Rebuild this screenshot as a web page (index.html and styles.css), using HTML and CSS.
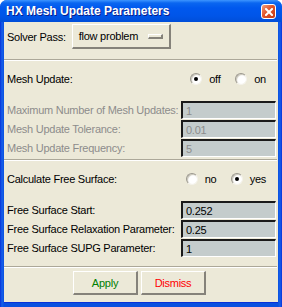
FILE: index.html
```html
<!DOCTYPE html>
<html lang="en">
<head>
    <meta charset="UTF-8">
    <title>HX Mesh Update Parameters</title>
    <link rel="stylesheet" href="styles.css">
</head>
<body>
    <div class="window">
        <div class="titlebar">
            <span class="title">HX Mesh Update Parameters</span>
            <span class="close">
                <svg width="8" height="8" viewBox="0 0 8 8">
                    <path d="M1 1 L7 7 M7 1 L1 7" stroke="#fff" stroke-width="2" stroke-linecap="square"/>
                </svg>
            </span>
        </div>

        <div class="client">
            <div class="section solver">
                <span class="label">Solver Pass:</span>
                <div class="menubutton">flow problem<span class="indicator"></span></div>
            </div>
            <div class="sep"></div>

            <div class="section mesh">
                <div class="head">
                    <span class="label">Mesh Update:</span>
                    <div class="radios">
                        <label class="radio first"><span class="dot checked"></span>off</label>
                        <label class="radio"><span class="dot"></span>on</label>
                    </div>
                </div>
                <div class="fields">
                    <div class="field disabled"><span class="label">Maximum Number of Mesh Updates:</span><div class="entry">1</div></div>
                    <div class="field disabled"><span class="label">Mesh Update Tolerance:</span><div class="entry">0.01</div></div>
                    <div class="field disabled"><span class="label">Mesh Update Frequency:</span><div class="entry">5</div></div>
                </div>
            </div>
            <div class="sep"></div>

            <div class="section surface">
                <div class="head">
                    <span class="label">Calculate Free Surface:</span>
                    <div class="radios">
                        <label class="radio first"><span class="dot"></span>no</label>
                        <label class="radio"><span class="dot checked"></span>yes</label>
                    </div>
                </div>
                <div class="fields">
                    <div class="field"><span class="label">Free Surface Start:</span><div class="entry">0.252</div></div>
                    <div class="field"><span class="label">Free Surface Relaxation Parameter:</span><div class="entry">0.25</div></div>
                    <div class="field"><span class="label">Free Surface SUPG Parameter:</span><div class="entry">1</div></div>
                </div>
            </div>
            <div class="sep"></div>

            <div class="actions">
                <button class="btn apply">Apply</button>
                <button class="btn dismiss">Dismiss</button>
            </div>
        </div>
    </div>
</body>
</html>
```

FILE: styles.css
```css
body {
    margin: 0;
    font-family: "Liberation Sans", Arial, sans-serif;
    font-size: 11px;
    letter-spacing: -0.25px;
    background-color: #fff;
}

.window {
    width: 282px;
    height: 307px;
    box-sizing: border-box;
    display: flex;
    flex-direction: column;
    background: linear-gradient(to right, #0831d9 0, #1660ea 2px, #0a50e0 4px, #0a50e0 278px, #1660ea 280px, #0831d9 282px);
    border-radius: 7px 7px 0 0;
    overflow: hidden;
}

.titlebar {
    height: 22px;
    flex-shrink: 0;
    display: flex;
    align-items: center;
    justify-content: space-between;
    padding: 0 6px 0 6px;
    background: linear-gradient(#3d95ff 0, #0a66f0 3px, #0058ee 8px, #0055e8 16px, #004ed9 22px);
}

.title {
    color: #fff;
    font-weight: bold;
    font-size: 12px;
    letter-spacing: 0;
    text-shadow: 1px 1px 0 #0a1e8a;
}

.close {
    width: 13px;
    height: 13px;
    border: 1px solid #fff;
    border-radius: 3px;
    background: linear-gradient(135deg, #f0a080 0, #e2552c 45%, #c23a14 100%);
    display: flex;
    align-items: center;
    justify-content: center;
    margin-top: 1px;
}

.client {
    flex: 1;
    margin: 0 4px 5px 4px;
    background-color: #ece9d8;
    display: flex;
    flex-direction: column;
    box-shadow: 0 1px 0 #0831d9;
}

.section {
    padding: 0 2px 0 3px;
}

.label {
    white-space: nowrap;
}

.solver {
    display: flex;
    align-items: center;
    gap: 6px;
    padding-top: 2px;
    padding-bottom: 10px;
}

.menubutton {
    width: 99px;
    height: 25px;
    box-sizing: border-box;
    display: flex;
    align-items: center;
    justify-content: space-between;
    padding: 0 6px 0 6px;
    border-style: solid;
    border-width: 1px 2px 2px 1px;
    border-color: #fff #85827a #85827a #fff;
}

.indicator {
    width: 15px;
    height: 5px;
    box-sizing: border-box;
    border-style: solid;
    border-width: 1px 2px 2px 1px;
    border-color: #fff #85827a #85827a #fff;
}

.sep {
    height: 1px;
    margin: 0 1px 0 0;
    background-color: #aca899;
    border-bottom: 1px solid #fff;
}

.mesh {
    padding-top: 9px;
    padding-bottom: 2px;
}

.surface {
    padding-top: 9px;
    padding-bottom: 9px;
}

.head {
    height: 18px;
    display: flex;
    align-items: center;
    justify-content: space-between;
}

.radios {
    display: flex;
    align-items: center;
    padding-right: 10px;
}

.radio {
    display: flex;
    align-items: center;
    gap: 7px;
}

.radio.first {
    width: 45px;
}

.dot {
    width: 12px;
    height: 12px;
    box-sizing: border-box;
    border-radius: 50%;
    background-color: #fff;
    border-style: solid;
    border-width: 1px;
    border-color: #9a978d #f4f2ea #f4f2ea #9a978d;
    box-shadow: inset 1px 1px 1px #c8c5b8;
    position: relative;
}

.dot.checked::after {
    content: "";
    position: absolute;
    left: 3px;
    top: 3px;
    width: 4px;
    height: 4px;
    border-radius: 50%;
    background-color: #000;
}

.fields {
    margin-top: 13px;
    display: flex;
    flex-direction: column;
    gap: 1px;
}

.field {
    display: flex;
    align-items: center;
    justify-content: space-between;
    height: 18px;
}

.field.disabled {
    color: #8c8c8c;
}

.entry {
    width: 95px;
    height: 18px;
    flex-shrink: 0;
    box-sizing: border-box;
    padding: 0 3px;
    display: flex;
    align-items: center;
    background-color: #c4cccc;
    border-style: solid;
    border-width: 2px 1px 1px 2px;
    border-color: #1a1a1a #fff #fff #1a1a1a;
}

.actions {
    display: flex;
    justify-content: center;
    gap: 3px;
    padding-top: 3px;
    padding-right: 3px;
}

.btn {
    width: 65px;
    height: 24px;
    box-sizing: border-box;
    background-color: #ece9d8;
    font-family: inherit;
    font-size: 11px;
    letter-spacing: -0.25px;
    border-style: solid;
    border-width: 1px 2px 2px 1px;
    border-color: #fff #85827a #85827a #fff;
    padding: 0;
}

.apply {
    color: #008000;
}

.dismiss {
    color: #ff0000;
}
```
